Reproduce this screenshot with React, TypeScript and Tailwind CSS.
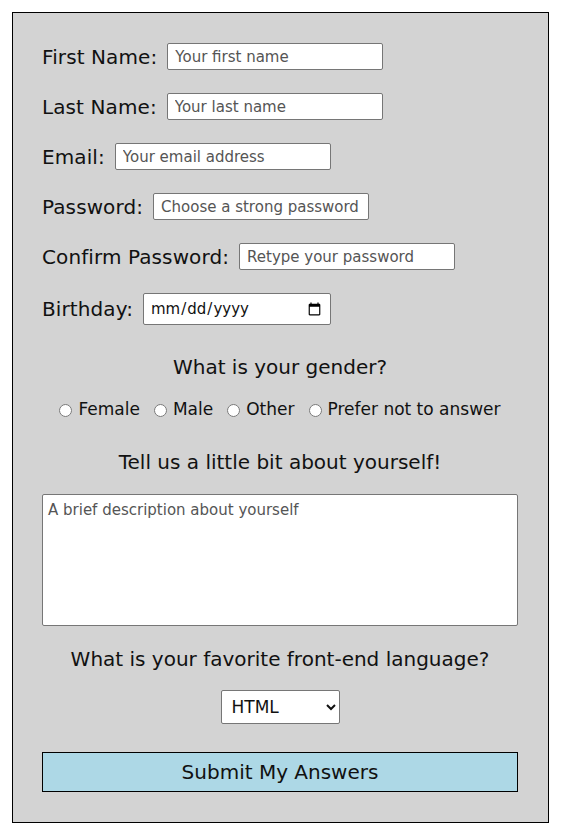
const fields = [
  { label: "First Name:", type: "text", placeholder: "Your first name" },
  { label: "Last Name:", type: "text", placeholder: "Your last name" },
  { label: "Email:", type: "email", placeholder: "Your email address" },
  { label: "Password:", type: "password", placeholder: "Choose a strong password" },
  { label: "Confirm Password:", type: "password", placeholder: "Retype your password" },
];

const genders = ["Female", "Male", "Other", "Prefer not to answer"];

const App = () => {
  return (
    <div className="bg-white p-3 font-['DejaVu_Sans',Verdana,sans-serif] text-[#111]">
      <form className="flex w-[537px] flex-col border border-black bg-[#d3d3d3] pt-[30px] pr-[30px] pb-[30px] pl-[29px]">
        {fields.map((f) => (
          <div key={f.label} className="mb-[23px] flex h-[27px] items-center gap-[10px]">
            <label className="text-[20px] leading-none tracking-[0.1px]">{f.label}</label>
            <input
              type={f.type}
              placeholder={f.placeholder}
              className="h-[27px] w-[216px] rounded-[2px] border border-[#767676] bg-white px-[7px] text-[15px] placeholder:text-[#555]"
            />
          </div>
        ))}

        <div className="flex h-[32px] items-center gap-[10px]">
          <label className="text-[20px] leading-none tracking-[0.1px]">Birthday:</label>
          <input
            type="date"
            className="h-[32px] w-[188px] rounded-[2px] border border-[#767676] bg-white px-[6px] text-[15px]"
          />
        </div>

        <h3 className="mt-[30px] text-center text-[20px] leading-[24px]">What is your gender?</h3>
        <div className="mt-[20px] flex h-[22px] items-center justify-center gap-[14px] text-[17px]">
          {genders.map((g) => (
            <label key={g} className="flex items-center gap-[6px]">
              <input type="radio" name="gender" className="m-0 h-[13px] w-[13px]" />
              {g}
            </label>
          ))}
        </div>

        <h3 className="mt-[29px] text-center text-[20px] leading-[24px]">
          Tell us a little bit about yourself!
        </h3>
        <textarea
          placeholder="A brief description about yourself"
          className="mt-[20px] h-[132px] w-full resize-none rounded-[2px] border border-[#767676] bg-white px-[5px] py-[4px] text-[15px] placeholder:text-[#555]"
        />

        <h3 className="mt-[21px] text-center text-[20px] leading-[24px]">
          What is your favorite front-end language?
        </h3>
        <select className="mt-[19px] h-[34px] w-[119px] self-center rounded-[2px] border border-[#767676] bg-white px-[6px] text-[17px]">
          <option>HTML</option>
          <option>CSS</option>
          <option>JavaScript</option>
        </select>

        <button
          type="button"
          className="mt-[28px] h-[40px] w-full border border-black bg-[#add8e6] text-[20px]"
        >
          Submit My Answers
        </button>
      </form>
    </div>
  );
};

export default App;
